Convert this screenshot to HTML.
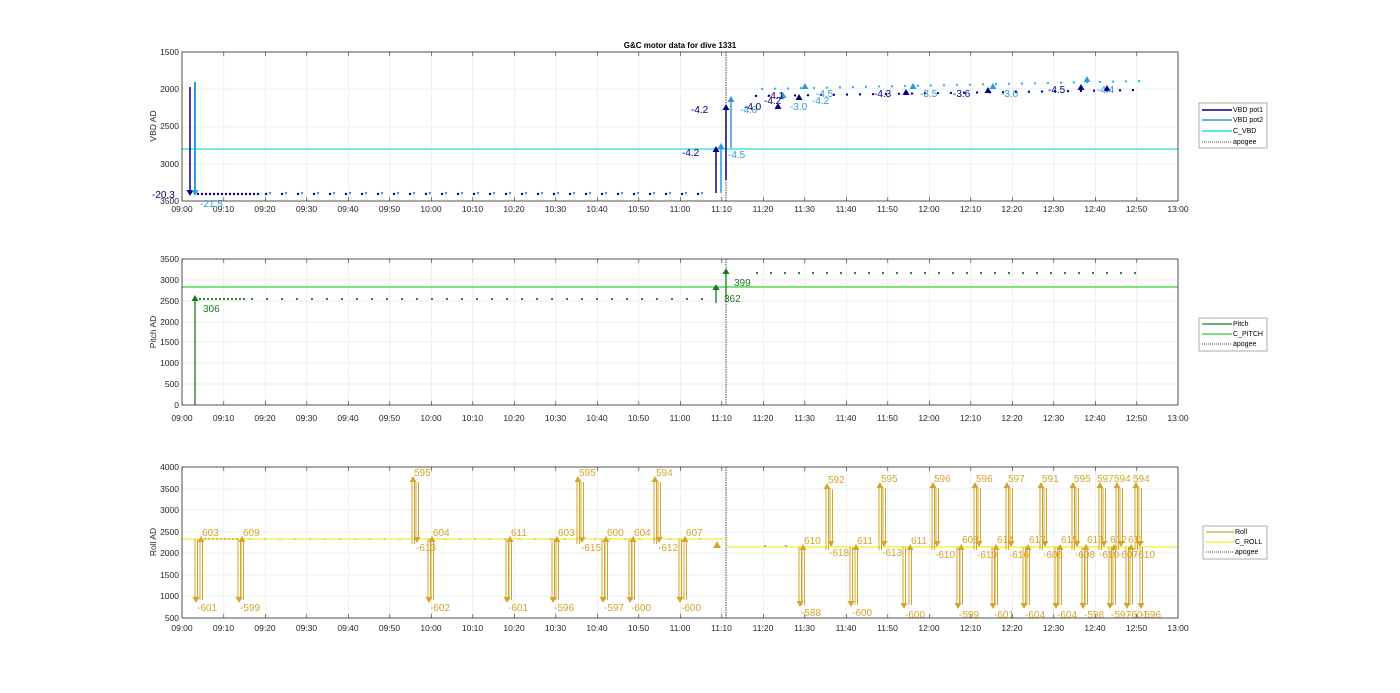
<!DOCTYPE html>
<html><head><meta charset="utf-8"><style>
html,body{margin:0;padding:0;background:#fff;}
svg{display:block;font-family:"Liberation Sans",sans-serif;}
.t{font-size:8.5px;fill:#262626;}
.ax{fill:none;stroke:#262626;stroke-width:0.8;}
.lg{font-size:7px;fill:#000;}
.g{stroke:#e6e6e6;stroke-width:0.8;}
</style></head><body>
<svg width="1400" height="693" viewBox="0 0 1400 693" xmlns="http://www.w3.org/2000/svg" xmlns:xlink="http://www.w3.org/1999/xlink">
<defs>
<pattern id="vg" patternUnits="userSpaceOnUse" x="182" y="0" width="41.5" height="693"><line x1="0" y1="0" x2="0" y2="693" stroke="#e6e6e6" stroke-width="1.2"/></pattern>
<pattern id="tk" patternUnits="userSpaceOnUse" x="182" y="0" width="41.5" height="693"><line x1="0" y1="0" x2="0" y2="693" stroke="#262626" stroke-width="1.2"/></pattern>
<polygon id="hu" points="-3.5,6 3.5,6 0,0"/>
<polygon id="hd" points="-3.5,-6 3.5,-6 0,0"/>
</defs>
<rect width="1400" height="693" fill="#fff"/>
<!-- grids -->
<rect x="183" y="52" width="994" height="149" fill="url(#vg)"/>
<rect x="183" y="259" width="994" height="146" fill="url(#vg)"/>
<rect x="183" y="467" width="994" height="151" fill="url(#vg)"/>
<g class="g">
<line x1="182" y1="89" x2="1178" y2="89"/><line x1="182" y1="127" x2="1178" y2="127"/><line x1="182" y1="164" x2="1178" y2="164"/>
<line x1="182" y1="280" x2="1178" y2="280"/><line x1="182" y1="301" x2="1178" y2="301"/><line x1="182" y1="322" x2="1178" y2="322"/><line x1="182" y1="342" x2="1178" y2="342"/><line x1="182" y1="363" x2="1178" y2="363"/><line x1="182" y1="384" x2="1178" y2="384"/>
<line x1="182" y1="489" x2="1178" y2="489"/><line x1="182" y1="510" x2="1178" y2="510"/><line x1="182" y1="532" x2="1178" y2="532"/><line x1="182" y1="553" x2="1178" y2="553"/><line x1="182" y1="575" x2="1178" y2="575"/><line x1="182" y1="596" x2="1178" y2="596"/>
</g>
<rect x="183" y="52" width="994" height="4" fill="url(#tk)"/><rect x="183" y="197" width="994" height="4" fill="url(#tk)"/>
<rect x="183" y="259" width="994" height="4" fill="url(#tk)"/><rect x="183" y="401" width="994" height="4" fill="url(#tk)"/>
<rect x="183" y="467" width="994" height="4" fill="url(#tk)"/><rect x="183" y="614" width="994" height="4" fill="url(#tk)"/>
<g stroke="#444" stroke-width="1" stroke-dasharray="1.5,1">
<line x1="726" y1="52" x2="726" y2="201"/><line x1="726" y1="259" x2="726" y2="405"/><line x1="726" y1="467" x2="726" y2="618"/>
</g>

<!-- VBD data -->
<line x1="182" y1="149" x2="1178" y2="149" stroke="#22dddd" stroke-width="1.2"/>
<g stroke-linecap="round" stroke-width="2.4" fill="none">
<line x1="198" y1="194" x2="260" y2="194" stroke="#00008b" stroke-dasharray="0 4"/>
<line x1="266" y1="194" x2="712" y2="194" stroke="#00008b" stroke-dasharray="0 16"/>
<line x1="270" y1="193" x2="712" y2="193" stroke="#3399dd" stroke-dasharray="0 16"/>
<line x1="756" y1="96" x2="1140" y2="90" stroke="#00008b" stroke-dasharray="0 13"/>
<line x1="762" y1="89" x2="1145" y2="81" stroke="#22bbee" stroke-dasharray="0 13"/>
</g>
<g stroke-width="1.5">
<line x1="190" y1="87" x2="190" y2="190" stroke="#00008b"/>
<line x1="195" y1="82" x2="195" y2="190" stroke="#3399dd" stroke-width="2"/>
<line x1="716" y1="193" x2="716" y2="152" stroke="#00008b"/>
<line x1="721" y1="193" x2="721" y2="149" stroke="#3399dd"/>
<line x1="726" y1="180" x2="726" y2="110" stroke="#00008b"/>
<line x1="731" y1="148" x2="731" y2="102" stroke="#3399dd"/>
</g>
<use xlink:href="#hd" x="190" y="196" fill="#00008b"/>
<use xlink:href="#hd" x="195" y="196" fill="#3399dd"/>
<use xlink:href="#hu" x="716" y="146" fill="#00008b"/>
<use xlink:href="#hu" x="721" y="143" fill="#3399dd"/>
<use xlink:href="#hu" x="726" y="104" fill="#00008b"/>
<use xlink:href="#hu" x="731" y="96" fill="#3399dd"/>
<g fill="#00008b"><use xlink:href="#hu" x="778" y="103"/><use xlink:href="#hu" x="799" y="94"/><use xlink:href="#hu" x="906" y="89"/><use xlink:href="#hu" x="988" y="87"/><use xlink:href="#hu" x="1081" y="84"/><use xlink:href="#hu" x="1107" y="85"/></g>
<g fill="#3399dd"><use xlink:href="#hu" x="783" y="92"/><use xlink:href="#hu" x="805" y="83"/><use xlink:href="#hu" x="913" y="83"/><use xlink:href="#hu" x="993" y="83"/><use xlink:href="#hu" x="1087" y="76"/></g>

<!-- Pitch data -->
<line x1="182" y1="287" x2="1178" y2="287" stroke="#33cc33" stroke-width="1.2"/>
<g stroke-linecap="round" stroke-width="2.2" stroke="#1a7a1a" fill="none">
<line x1="200" y1="299" x2="245" y2="299" stroke-dasharray="0 4"/>
<line x1="252" y1="299" x2="712" y2="299" stroke-dasharray="0 15"/>
<line x1="757" y1="273" x2="1140" y2="273" stroke-dasharray="0 14"/>
</g>
<g stroke="#1a7a1a" stroke-width="1.3">
<line x1="195" y1="405" x2="195" y2="300"/><line x1="716" y1="303" x2="716" y2="290"/><line x1="726" y1="300" x2="726" y2="274"/>
</g>
<g fill="#1a7a1a"><use xlink:href="#hu" x="195" y="295"/><use xlink:href="#hu" x="716" y="284"/><use xlink:href="#hu" x="726" y="268"/></g>

<!-- Roll data -->
<line x1="182" y1="539" x2="726" y2="539" stroke="#eeee33" stroke-width="1.2"/>
<line x1="726" y1="547" x2="1178" y2="547" stroke="#eeee33" stroke-width="1.2"/>
<g stroke-linecap="round" stroke-width="2" stroke="#d4a52a" fill="none">
<line x1="205" y1="539" x2="240" y2="539" stroke-dasharray="0 4"/>
<line x1="250" y1="539" x2="710" y2="539" stroke-dasharray="0 15" stroke-width="1.6"/>
</g>
<circle cx="765" cy="546" r="1" fill="#999"/><circle cx="786" cy="546" r="1" fill="#999"/>
<polygon points="713,548 721,548 717,541" fill="#d4a52a"/>
<path fill="none" stroke="#d4a52a" stroke-width="1" d="
M195 539V597M197.5 539V597M200 600V542M202.5 600V542
M238 539V597M240.5 539V597M241 600V542M243.5 600V542
M428 539V597M430.5 539V597M431 600V542M433.5 600V542
M506 539V597M508.5 539V597M509 600V542M511.5 600V542
M552 539V597M554.5 539V597M556 600V542M558.5 600V542
M602 539V597M604.5 539V597M605 600V542M607.5 600V542
M629 539V597M631.5 539V597M632 600V542M634.5 600V542
M679 539V597M681.5 539V597M684 600V542M686.5 600V542
M412 544V482M414.5 544V482M416 482V537M418.5 482V537
M577 544V482M579.5 544V482M581 482V537M583.5 482V537
M654 544V482M656.5 544V482M658 482V537M660.5 482V537
M799 547V601M801.5 547V601M802 605V550M804.5 605V550
M850 547V601M852.5 547V601M855 605V550M857.5 605V550
M903 547V603M905.5 547V603M909 605V550M911.5 605V550
M957 547V603M959.5 547V603M960 605V550M962.5 605V550
M992 547V603M994.5 547V603M995 605V550M997.5 605V550
M1023 547V603M1025.5 547V603M1027 605V550M1029.5 605V550
M1055 547V603M1057.5 547V603M1059 605V550M1061.5 605V550
M1082 547V603M1084.5 547V603M1085 605V550M1087.5 605V550
M1109 547V603M1111.5 547V603M1113 605V550M1115.5 605V550
M1126 547V603M1128.5 547V603M1130 605V550M1132.5 605V550
M1140 547V603M1142.5 547V603
M826 550V489M828.5 550V489M830 489V541M832.5 489V541
M879 550V488M881.5 550V488M883 488V541M885.5 488V541
M932 550V488M934.5 550V488M936 488V541M938.5 488V541
M974 550V488M976.5 550V488M978 488V541M980.5 488V541
M1006 550V488M1008.5 550V488M1010 488V541M1012.5 488V541
M1040 550V488M1042.5 550V488M1044 488V541M1046.5 488V541
M1072 550V488M1074.5 550V488M1076 488V541M1078.5 488V541
M1099 550V488M1101.5 550V488M1103 488V541M1105.5 488V541
M1116 550V488M1118.5 550V488M1120 488V541M1122.5 488V541
M1135 550V488M1137.5 550V488M1139 488V541M1141.5 488V541"/>
<g fill="#d4a52a">
<use xlink:href="#hd" x="196" y="603"/><use xlink:href="#hu" x="201" y="536"/>
<use xlink:href="#hd" x="239" y="603"/><use xlink:href="#hu" x="242" y="536"/>
<use xlink:href="#hd" x="429" y="603"/><use xlink:href="#hu" x="432" y="536"/>
<use xlink:href="#hd" x="507" y="603"/><use xlink:href="#hu" x="510" y="536"/>
<use xlink:href="#hd" x="553" y="603"/><use xlink:href="#hu" x="557" y="536"/>
<use xlink:href="#hd" x="603" y="603"/><use xlink:href="#hu" x="606" y="536"/>
<use xlink:href="#hd" x="630" y="603"/><use xlink:href="#hu" x="633" y="536"/>
<use xlink:href="#hd" x="680" y="603"/><use xlink:href="#hu" x="685" y="536"/>
<use xlink:href="#hu" x="413" y="476"/><use xlink:href="#hd" x="417" y="543"/>
<use xlink:href="#hu" x="578" y="476"/><use xlink:href="#hd" x="582" y="543"/>
<use xlink:href="#hu" x="655" y="476"/><use xlink:href="#hd" x="659" y="543"/>
<use xlink:href="#hd" x="800" y="607"/><use xlink:href="#hu" x="803" y="544"/>
<use xlink:href="#hd" x="851" y="607"/><use xlink:href="#hu" x="856" y="544"/>
<use xlink:href="#hd" x="904" y="609"/><use xlink:href="#hu" x="910" y="544"/>
<use xlink:href="#hd" x="958" y="609"/><use xlink:href="#hu" x="961" y="544"/>
<use xlink:href="#hd" x="993" y="609"/><use xlink:href="#hu" x="996" y="544"/>
<use xlink:href="#hd" x="1024" y="609"/><use xlink:href="#hu" x="1028" y="544"/>
<use xlink:href="#hd" x="1056" y="609"/><use xlink:href="#hu" x="1060" y="544"/>
<use xlink:href="#hd" x="1083" y="609"/><use xlink:href="#hu" x="1086" y="544"/>
<use xlink:href="#hd" x="1110" y="609"/><use xlink:href="#hu" x="1114" y="544"/>
<use xlink:href="#hd" x="1127" y="609"/><use xlink:href="#hu" x="1131" y="544"/>
<use xlink:href="#hd" x="1141" y="609"/>
<use xlink:href="#hu" x="827" y="483"/><use xlink:href="#hd" x="831" y="547"/>
<use xlink:href="#hu" x="880" y="482"/><use xlink:href="#hd" x="884" y="547"/>
<use xlink:href="#hu" x="933" y="482"/><use xlink:href="#hd" x="937" y="547"/>
<use xlink:href="#hu" x="975" y="482"/><use xlink:href="#hd" x="979" y="547"/>
<use xlink:href="#hu" x="1007" y="482"/><use xlink:href="#hd" x="1011" y="547"/>
<use xlink:href="#hu" x="1041" y="482"/><use xlink:href="#hd" x="1045" y="547"/>
<use xlink:href="#hu" x="1073" y="482"/><use xlink:href="#hd" x="1077" y="547"/>
<use xlink:href="#hu" x="1100" y="482"/><use xlink:href="#hd" x="1104" y="547"/>
<use xlink:href="#hu" x="1117" y="482"/><use xlink:href="#hd" x="1121" y="547"/>
<use xlink:href="#hu" x="1136" y="482"/><use xlink:href="#hd" x="1140" y="547"/>
</g>
<g style="font-size:10px" fill="#d4a52a">
<text x="197" y="611">-601</text><text x="202" y="536">603</text><text x="240" y="611">-599</text><text x="243" y="536">609</text>
<text x="414" y="476">595</text><text x="416" y="551">-613</text><text x="430" y="611">-602</text><text x="433" y="536">604</text>
<text x="508" y="611">-601</text><text x="511" y="536">611</text><text x="554" y="611">-596</text><text x="558" y="536">603</text>
<text x="579" y="476">595</text><text x="581" y="551">-615</text><text x="604" y="611">-597</text><text x="607" y="536">600</text>
<text x="631" y="611">-600</text><text x="634" y="536">604</text><text x="656" y="476">594</text><text x="658" y="551">-612</text>
<text x="681" y="611">-600</text><text x="686" y="536">607</text>
<text x="801" y="616">-588</text><text x="804" y="544">610</text><text x="828" y="483">592</text><text x="829" y="556">-618</text>
<text x="852" y="616">-600</text><text x="857" y="544">611</text><text x="881" y="482">595</text><text x="882" y="556">-613</text>
<text x="905" y="618">-600</text><text x="911" y="544">611</text><text x="934" y="482">596</text><text x="935" y="558">-610</text>
<text x="959" y="618">-599</text><text x="962" y="543">608</text><text x="976" y="482">596</text><text x="977" y="558">-610</text>
<text x="994" y="618">-601</text><text x="997" y="543">614</text><text x="1008" y="482">597</text><text x="1009" y="558">-616</text>
<text x="1025" y="618">-604</text><text x="1029" y="543">617</text><text x="1042" y="482">591</text><text x="1043" y="558">-606</text>
<text x="1057" y="618">-604</text><text x="1061" y="543">615</text><text x="1074" y="482">595</text><text x="1075" y="558">-608</text>
<text x="1084" y="618">-598</text><text x="1087" y="543">613</text><text x="1097" y="482">597</text><text x="1099" y="558">-610</text>
<text x="1111" y="618">-597</text><text x="1110" y="543">612</text><text x="1114" y="482">594</text><text x="1118" y="558">-607</text>
<text x="1128" y="618">-601</text><text x="1128" y="543">611</text><text x="1133" y="482">594</text><text x="1135" y="558">-610</text><text x="1141" y="618">-596</text>
</g>

<!-- axes boxes -->
<rect class="ax" x="182" y="52" width="996" height="149"/>
<rect class="ax" x="182" y="259" width="996" height="146"/>
<rect class="ax" x="182" y="467" width="996" height="151"/>
<text x="680" y="48" text-anchor="middle" style="font-size:8px;font-weight:bold" fill="#000">G&amp;C motor data for dive 1331</text>
<g class="t" text-anchor="end">
<text x="179" y="55">1500</text><text x="179" y="92">2000</text><text x="179" y="129">2500</text><text x="179" y="167">3000</text><text x="179" y="204">3500</text>
<text x="179" y="262">3500</text><text x="179" y="283">3000</text><text x="179" y="304">2500</text><text x="179" y="325">2000</text><text x="179" y="345">1500</text><text x="179" y="366">1000</text><text x="179" y="387">500</text><text x="179" y="408">0</text>
<text x="179" y="470">4000</text><text x="179" y="492">3500</text><text x="179" y="513">3000</text><text x="179" y="535">2500</text><text x="179" y="556">2000</text><text x="179" y="578">1500</text><text x="179" y="599">1000</text><text x="179" y="621">500</text>
</g>
<g class="t" text-anchor="middle">
<text transform="translate(156,126) rotate(-90)">VBD AD</text>
<text transform="translate(156,332) rotate(-90)">Pitch AD</text>
<text transform="translate(156,542) rotate(-90)">Roll AD</text>
</g>
<g class="t" text-anchor="middle">
<text x="182" y="212">09:00</text><text x="223.5" y="212">09:10</text><text x="265" y="212">09:20</text><text x="306.5" y="212">09:30</text><text x="348" y="212">09:40</text><text x="389.5" y="212">09:50</text><text x="431" y="212">10:00</text><text x="472.5" y="212">10:10</text><text x="514" y="212">10:20</text><text x="555.5" y="212">10:30</text><text x="597" y="212">10:40</text><text x="638.5" y="212">10:50</text><text x="680" y="212">11:00</text><text x="721.5" y="212">11:10</text><text x="763" y="212">11:20</text><text x="804.5" y="212">11:30</text><text x="846" y="212">11:40</text><text x="887.5" y="212">11:50</text><text x="929" y="212">12:00</text><text x="970.5" y="212">12:10</text><text x="1012" y="212">12:20</text><text x="1053.5" y="212">12:30</text><text x="1095" y="212">12:40</text><text x="1136.5" y="212">12:50</text><text x="1178" y="212">13:00</text>
<text x="182" y="421">09:00</text><text x="223.5" y="421">09:10</text><text x="265" y="421">09:20</text><text x="306.5" y="421">09:30</text><text x="348" y="421">09:40</text><text x="389.5" y="421">09:50</text><text x="431" y="421">10:00</text><text x="472.5" y="421">10:10</text><text x="514" y="421">10:20</text><text x="555.5" y="421">10:30</text><text x="597" y="421">10:40</text><text x="638.5" y="421">10:50</text><text x="680" y="421">11:00</text><text x="721.5" y="421">11:10</text><text x="763" y="421">11:20</text><text x="804.5" y="421">11:30</text><text x="846" y="421">11:40</text><text x="887.5" y="421">11:50</text><text x="929" y="421">12:00</text><text x="970.5" y="421">12:10</text><text x="1012" y="421">12:20</text><text x="1053.5" y="421">12:30</text><text x="1095" y="421">12:40</text><text x="1136.5" y="421">12:50</text><text x="1178" y="421">13:00</text>
<text x="182" y="631">09:00</text><text x="223.5" y="631">09:10</text><text x="265" y="631">09:20</text><text x="306.5" y="631">09:30</text><text x="348" y="631">09:40</text><text x="389.5" y="631">09:50</text><text x="431" y="631">10:00</text><text x="472.5" y="631">10:10</text><text x="514" y="631">10:20</text><text x="555.5" y="631">10:30</text><text x="597" y="631">10:40</text><text x="638.5" y="631">10:50</text><text x="680" y="631">11:00</text><text x="721.5" y="631">11:10</text><text x="763" y="631">11:20</text><text x="804.5" y="631">11:30</text><text x="846" y="631">11:40</text><text x="887.5" y="631">11:50</text><text x="929" y="631">12:00</text><text x="970.5" y="631">12:10</text><text x="1012" y="631">12:20</text><text x="1053.5" y="631">12:30</text><text x="1095" y="631">12:40</text><text x="1136.5" y="631">12:50</text><text x="1178" y="631">13:00</text>
</g>
<!-- legends -->
<rect x="1199" y="103" width="68" height="45" fill="#fff" stroke="#888" stroke-width="0.7"/>
<line x1="1202" y1="110" x2="1232" y2="110" stroke="#00008b" stroke-width="1.5"/><text class="lg" x="1233" y="112">VBD pot1</text>
<line x1="1202" y1="120" x2="1232" y2="120" stroke="#3399dd" stroke-width="1.5"/><text class="lg" x="1233" y="122">VBD pot2</text>
<line x1="1202" y1="131" x2="1232" y2="131" stroke="#22dddd" stroke-width="1.5"/><text class="lg" x="1233" y="133">C_VBD</text>
<line x1="1202" y1="142" x2="1232" y2="142" stroke="#444" stroke-dasharray="1,1"/><text class="lg" x="1233" y="144">apogee</text>
<rect x="1199" y="318" width="68" height="33" fill="#fff" stroke="#888" stroke-width="0.7"/>
<line x1="1202" y1="324" x2="1232" y2="324" stroke="#1a7a1a" stroke-width="1.2"/><text class="lg" x="1233" y="326">Pitch</text>
<line x1="1202" y1="334" x2="1232" y2="334" stroke="#33cc33" stroke-width="1.2"/><text class="lg" x="1233" y="336">C_PITCH</text>
<line x1="1202" y1="344" x2="1232" y2="344" stroke="#444" stroke-dasharray="1,1"/><text class="lg" x="1233" y="346">apogee</text>
<rect x="1203" y="526" width="64" height="33" fill="#fff" stroke="#888" stroke-width="0.7"/>
<line x1="1206" y1="532" x2="1234" y2="532" stroke="#d4a52a" stroke-width="1.2"/><text class="lg" x="1235" y="534">Roll</text>
<line x1="1206" y1="542" x2="1234" y2="542" stroke="#eeee33" stroke-width="1.2"/><text class="lg" x="1235" y="544">C_ROLL</text>
<line x1="1206" y1="552" x2="1234" y2="552" stroke="#444" stroke-dasharray="1,1"/><text class="lg" x="1235" y="554">apogee</text>
<!-- VBD annotations -->
<g style="font-size:10px">
<text x="152" y="198" fill="#00008b">-20.3</text>
<text x="200" y="207" fill="#3399dd">-21.5</text>
<text x="682" y="156" fill="#00008b">-4.2</text>
<text x="691" y="113" fill="#00008b">-4.2</text>
<text x="728" y="158" fill="#3399dd">-4.5</text>
<text x="740" y="113" fill="#3399dd">-4.0</text>
<text x="744" y="110" fill="#00008b">-4.0</text>
<text x="767" y="99" fill="#00008b">-4.1</text>
<text x="764" y="104" fill="#00008b">-4.2</text>
<text x="790" y="110" fill="#3399dd">-3.0</text>
<text x="812" y="104" fill="#3399dd">-4.2</text>
<text x="816" y="97" fill="#3399dd">-4.5</text>
<text x="874" y="97" fill="#00008b">-4.3</text>
<text x="920" y="97" fill="#3399dd">-3.5</text>
<text x="953" y="97" fill="#00008b">-3.6</text>
<text x="1001" y="97" fill="#3399dd">-3.0</text>
<text x="1048" y="93" fill="#00008b">-4.5</text>
<text x="1097" y="93" fill="#3399dd">-4.4</text>
</g>
<g style="font-size:10px" fill="#1a7a1a">
<text x="203" y="312">306</text><text x="724" y="302">362</text><text x="734" y="286">399</text>
</g>
</svg>
</body></html>
